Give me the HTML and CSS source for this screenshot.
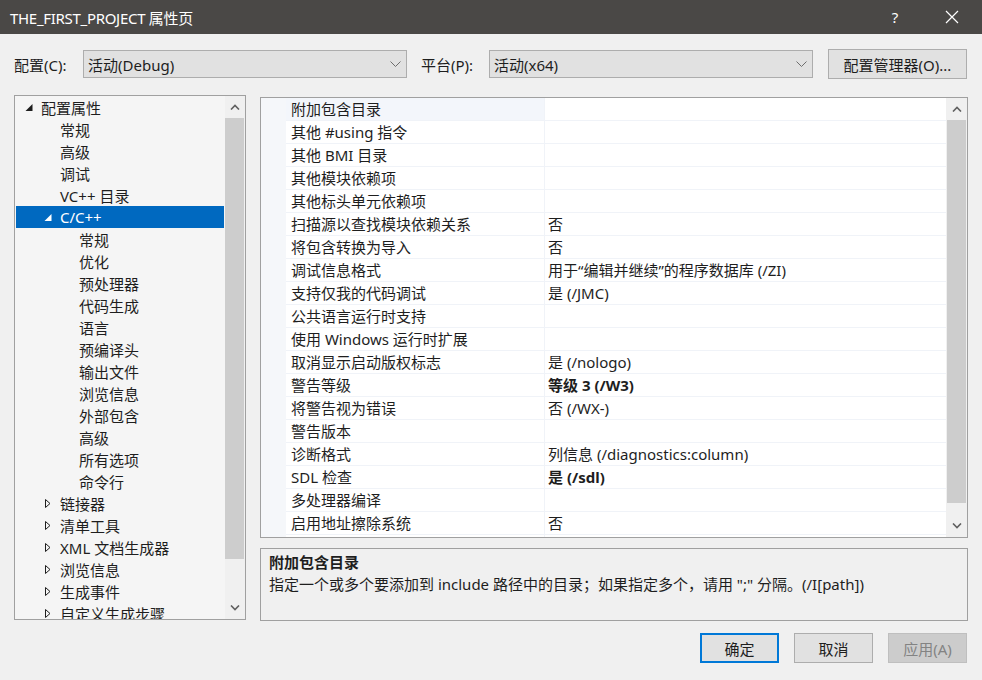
FILE: index.html
```html
<!DOCTYPE html>
<html lang="zh-CN">
<head>
    <meta charset="UTF-8">
    <title>THE_FIRST_PROJECT 属性页</title>
    <link rel="stylesheet" href="styles.css">
</head>
<body>

    <div class="titlebar">
        <span class="title">THE_FIRST_PROJECT 属性页</span>
        <span class="tb-help">?</span>
        <span class="tb-close">
            <svg width="14" height="14" viewBox="0 0 14 14"><path d="M1 1 L13 13 M13 1 L1 13" stroke="#fff" stroke-width="1.2" fill="none"/></svg>
        </span>
    </div>

    <div class="config-row">
        <label class="lbl lbl-config">配置(C):</label>
        <div class="combo">
            <span>活动(Debug)</span>
            <svg class="chev" width="11" height="6" viewBox="0 0 11 6"><path d="M0.5 0.5 L5.5 5.5 L10.5 0.5" stroke="#6d6d6d" fill="none"/></svg>
        </div>
        <label class="lbl lbl-platform">平台(P):</label>
        <div class="combo">
            <span>活动(x64)</span>
            <svg class="chev" width="11" height="6" viewBox="0 0 11 6"><path d="M0.5 0.5 L5.5 5.5 L10.5 0.5" stroke="#6d6d6d" fill="none"/></svg>
        </div>
        <button class="btn btn-manager">配置管理器(O)...</button>
    </div>

    <div class="main">
        <!-- left tree -->
        <div class="tree">
            <ul class="tree-list">
                <li class="node l0"><span class="exp"><svg width="18" height="22"><polygon points="9.5,8 9.5,15 2.5,15" fill="#1e1e1e"/></svg></span>配置属性</li>
                <li class="node l1"><span class="exp"></span>常规</li>
                <li class="node l1"><span class="exp"></span>高级</li>
                <li class="node l1"><span class="exp"></span>调试</li>
                <li class="node l1"><span class="exp"></span>VC++ 目录</li>
                <li class="node l1 selected"><span class="exp"><svg width="18" height="22"><polygon points="9.5,8 9.5,15 2.5,15" fill="#fff"/></svg></span>C/C++</li>
                <li class="node l2"><span class="exp"></span>常规</li>
                <li class="node l2"><span class="exp"></span>优化</li>
                <li class="node l2"><span class="exp"></span>预处理器</li>
                <li class="node l2"><span class="exp"></span>代码生成</li>
                <li class="node l2"><span class="exp"></span>语言</li>
                <li class="node l2"><span class="exp"></span>预编译头</li>
                <li class="node l2"><span class="exp"></span>输出文件</li>
                <li class="node l2"><span class="exp"></span>浏览信息</li>
                <li class="node l2"><span class="exp"></span>外部包含</li>
                <li class="node l2"><span class="exp"></span>高级</li>
                <li class="node l2"><span class="exp"></span>所有选项</li>
                <li class="node l2"><span class="exp"></span>命令行</li>
                <li class="node l1"><span class="exp"><svg width="18" height="22"><polygon points="3.5,7.5 3.5,15.5 8,11.5" fill="none" stroke="#1e1e1e"/></svg></span>链接器</li>
                <li class="node l1"><span class="exp"><svg width="18" height="22"><polygon points="3.5,7.5 3.5,15.5 8,11.5" fill="none" stroke="#1e1e1e"/></svg></span>清单工具</li>
                <li class="node l1"><span class="exp"><svg width="18" height="22"><polygon points="3.5,7.5 3.5,15.5 8,11.5" fill="none" stroke="#1e1e1e"/></svg></span>XML 文档生成器</li>
                <li class="node l1"><span class="exp"><svg width="18" height="22"><polygon points="3.5,7.5 3.5,15.5 8,11.5" fill="none" stroke="#1e1e1e"/></svg></span>浏览信息</li>
                <li class="node l1"><span class="exp"><svg width="18" height="22"><polygon points="3.5,7.5 3.5,15.5 8,11.5" fill="none" stroke="#1e1e1e"/></svg></span>生成事件</li>
                <li class="node l1"><span class="exp"><svg width="18" height="22"><polygon points="3.5,7.5 3.5,15.5 8,11.5" fill="none" stroke="#1e1e1e"/></svg></span>自定义生成步骤</li>
            </ul>
            <div class="scrollbar tree-scroll">
                <div class="sb-arrow"><svg width="10" height="6" viewBox="0 0 10 6"><path d="M1 5.5 L5 1.5 L9 5.5" stroke="#606060" stroke-width="1.6" fill="none"/></svg></div>
                <div class="sb-thumb"></div>
                <div class="sb-track"></div>
                <div class="sb-arrow"><svg width="10" height="6" viewBox="0 0 10 6"><path d="M1 0.5 L5 4.5 L9 0.5" stroke="#606060" stroke-width="1.6" fill="none"/></svg></div>
            </div>
        </div>

        <div class="right">
            <!-- property grid -->
            <div class="grid">
                <div class="grid-margin"></div>
                <div class="grid-rows">
                    <div class="prow current"><div class="pname">附加包含目录</div><div class="pval"></div></div>
                    <div class="prow"><div class="pname">其他 #using 指令</div><div class="pval"></div></div>
                    <div class="prow"><div class="pname">其他 BMI 目录</div><div class="pval"></div></div>
                    <div class="prow"><div class="pname">其他模块依赖项</div><div class="pval"></div></div>
                    <div class="prow"><div class="pname">其他标头单元依赖项</div><div class="pval"></div></div>
                    <div class="prow"><div class="pname">扫描源以查找模块依赖关系</div><div class="pval">否</div></div>
                    <div class="prow"><div class="pname">将包含转换为导入</div><div class="pval">否</div></div>
                    <div class="prow"><div class="pname">调试信息格式</div><div class="pval">用于“编辑并继续”的程序数据库 (/ZI)</div></div>
                    <div class="prow"><div class="pname">支持仅我的代码调试</div><div class="pval">是 (/JMC)</div></div>
                    <div class="prow"><div class="pname">公共语言运行时支持</div><div class="pval"></div></div>
                    <div class="prow"><div class="pname">使用 Windows 运行时扩展</div><div class="pval"></div></div>
                    <div class="prow"><div class="pname">取消显示启动版权标志</div><div class="pval">是 (/nologo)</div></div>
                    <div class="prow"><div class="pname">警告等级</div><div class="pval bold">等级 3 (/W3)</div></div>
                    <div class="prow"><div class="pname">将警告视为错误</div><div class="pval">否 (/WX-)</div></div>
                    <div class="prow"><div class="pname">警告版本</div><div class="pval"></div></div>
                    <div class="prow"><div class="pname">诊断格式</div><div class="pval">列信息 (/diagnostics:column)</div></div>
                    <div class="prow"><div class="pname">SDL 检查</div><div class="pval bold">是 (/sdl)</div></div>
                    <div class="prow"><div class="pname">多处理器编译</div><div class="pval"></div></div>
                    <div class="prow"><div class="pname">启用地址擦除系统</div><div class="pval">否</div></div>
                    <div class="prow"><div class="pname">启用模糊支持(实验性)</div><div class="pval">否</div></div>
                </div>
                <div class="scrollbar grid-scroll">
                    <div class="sb-arrow"><svg width="10" height="6" viewBox="0 0 10 6"><path d="M1 5.5 L5 1.5 L9 5.5" stroke="#606060" stroke-width="1.6" fill="none"/></svg></div>
                    <div class="sb-thumb"></div>
                    <div class="sb-track"></div>
                    <div class="sb-arrow"><svg width="10" height="6" viewBox="0 0 10 6"><path d="M1 0.5 L5 4.5 L9 0.5" stroke="#606060" stroke-width="1.6" fill="none"/></svg></div>
                </div>
            </div>

            <div class="desc">
                <div class="desc-title">附加包含目录</div>
                <div class="desc-text">指定一个或多个要添加到 include 路径中的目录；如果指定多个，请用 ";" 分隔。(/I[path])</div>
            </div>
        </div>
    </div>

    <div class="buttons">
        <button class="btn btn-ok">确定</button>
        <button class="btn">取消</button>
        <button class="btn btn-disabled">应用(A)</button>
    </div>

</body>
</html>
```

FILE: styles.css
```css
body {
    margin: 0;
    padding: 0;
    background-color: #f0f0f0;
    font-family: "Noto Sans", "Noto Sans CJK SC", sans-serif;
    font-size: 15px;
    color: #1e1e1e;
    width: 982px;
    height: 680px;
    overflow: hidden;
}

/* title bar */
.titlebar {
    height: 34px;
    background-color: #4a4846;
    color: white;
    display: flex;
    align-items: center;
    padding-left: 10px;
}

.title {
    flex: 1;
    font-size: 15px;
    letter-spacing: -0.3px;
}

.tb-help {
    width: 20px;
    text-align: center;
    font-size: 15px;
    margin-right: 40px;
}

.tb-close {
    display: flex;
    margin-right: 23px;
}

/* config row */
.config-row {
    display: flex;
    align-items: center;
    height: 30px;
    margin-top: 15px;
    padding-left: 14px;
}

.lbl {
    width: 69px;
}

.lbl-platform {
    margin-left: 14px;
    width: 68px;
}

.combo {
    width: 324px;
    height: 28px;
    box-sizing: border-box;
    background-color: #e1e1e1;
    border: 1px solid #adadad;
    display: flex;
    align-items: center;
    padding-left: 4px;
}

.combo span {
    flex: 1;
}

.chev {
    margin-right: 5px;
}

.btn {
    width: 79px;
    height: 30px;
    box-sizing: border-box;
    background-color: #e1e1e1;
    border: 1px solid #adadad;
    font-family: inherit;
    font-size: 15px;
    color: #1e1e1e;
    padding: 0;
}

.btn-manager {
    width: 139px;
    margin-left: 15px;
}

/* main area */
.main {
    display: flex;
    margin-top: 16px;
    padding-left: 14px;
    height: 526px;
}

.tree {
    width: 232px;
    height: 525px;
    box-sizing: border-box;
    border: 1px solid #a0a0a0;
    background-color: #f5f5f5;
    display: flex;
}

.tree-list {
    list-style: none;
    margin: 0;
    padding: 0 1px;
    width: 210px;
    box-sizing: border-box;
    overflow: hidden;
}

.node {
    height: 22px;
    display: flex;
    align-items: center;
    white-space: nowrap;
}

.node.l0 { padding-left: 7px; }
.node.l1 { padding-left: 26px; }
.node.l2 { padding-left: 45px; }

.exp {
    width: 18px;
    height: 22px;
    flex-shrink: 0;
}

.node.selected {
    background-color: #0069c0;
    color: white;
}

/* scrollbars */
.scrollbar {
    display: flex;
    flex-direction: column;
    background-color: #f0f0f0;
}

.tree-scroll {
    width: 20px;
}

.sb-arrow {
    height: 22px;
    display: flex;
    align-items: center;
    justify-content: center;
    flex-shrink: 0;
}

.sb-thumb {
    background-color: #cdcdcd;
    margin: 0 1px 0 0;
}

.tree-scroll .sb-thumb { height: 441px; }

.sb-track {
    flex: 1;
}

/* right side */
.right {
    margin-left: 14px;
    width: 708px;
}

.grid {
    margin-top: 2px;
    height: 441px;
    box-sizing: border-box;
    border: 1px solid #a0a0a0;
    background-color: white;
    display: flex;
    overflow: hidden;
}

.grid-margin {
    width: 25px;
    background-color: #f5f7fa;
    flex-shrink: 0;
}

.grid-rows {
    flex: 1;
    overflow: hidden;
}

.prow {
    display: flex;
    height: 23px;
    box-sizing: border-box;
    border-bottom: 1px solid #f0f3f8;
    align-items: stretch;
}

.pname {
    width: 259px;
    box-sizing: border-box;
    border-right: 1px solid #f0f3f8;
    padding-left: 5px;
    line-height: 22px;
    white-space: nowrap;
}

.prow.current .pname {
    background-color: #f3f6fb;
}

.pval {
    flex: 1;
    padding-left: 3px;
    line-height: 22px;
    white-space: nowrap;
}

.bold {
    font-weight: bold;
}

.grid-scroll {
    width: 20px;
    padding-left: 1px;
}

.grid-scroll .sb-thumb { height: 383px; }

.desc {
    margin-top: 10px;
    height: 73px;
    box-sizing: border-box;
    border: 1px solid #a0a0a0;
    background-color: #f0f0f0;
    padding: 2px 8px 0;
    line-height: 22px;
}

.desc-title {
    font-weight: bold;
}

/* bottom buttons */
.buttons {
    display: flex;
    justify-content: flex-end;
    gap: 15px;
    margin-top: 12px;
    padding-right: 15px;
}

.btn-ok {
    border: 2px solid #0078d7;
}

.btn-disabled {
    background-color: #cccccc;
    border-color: #bfbfbf;
    color: #838383;
}
```
